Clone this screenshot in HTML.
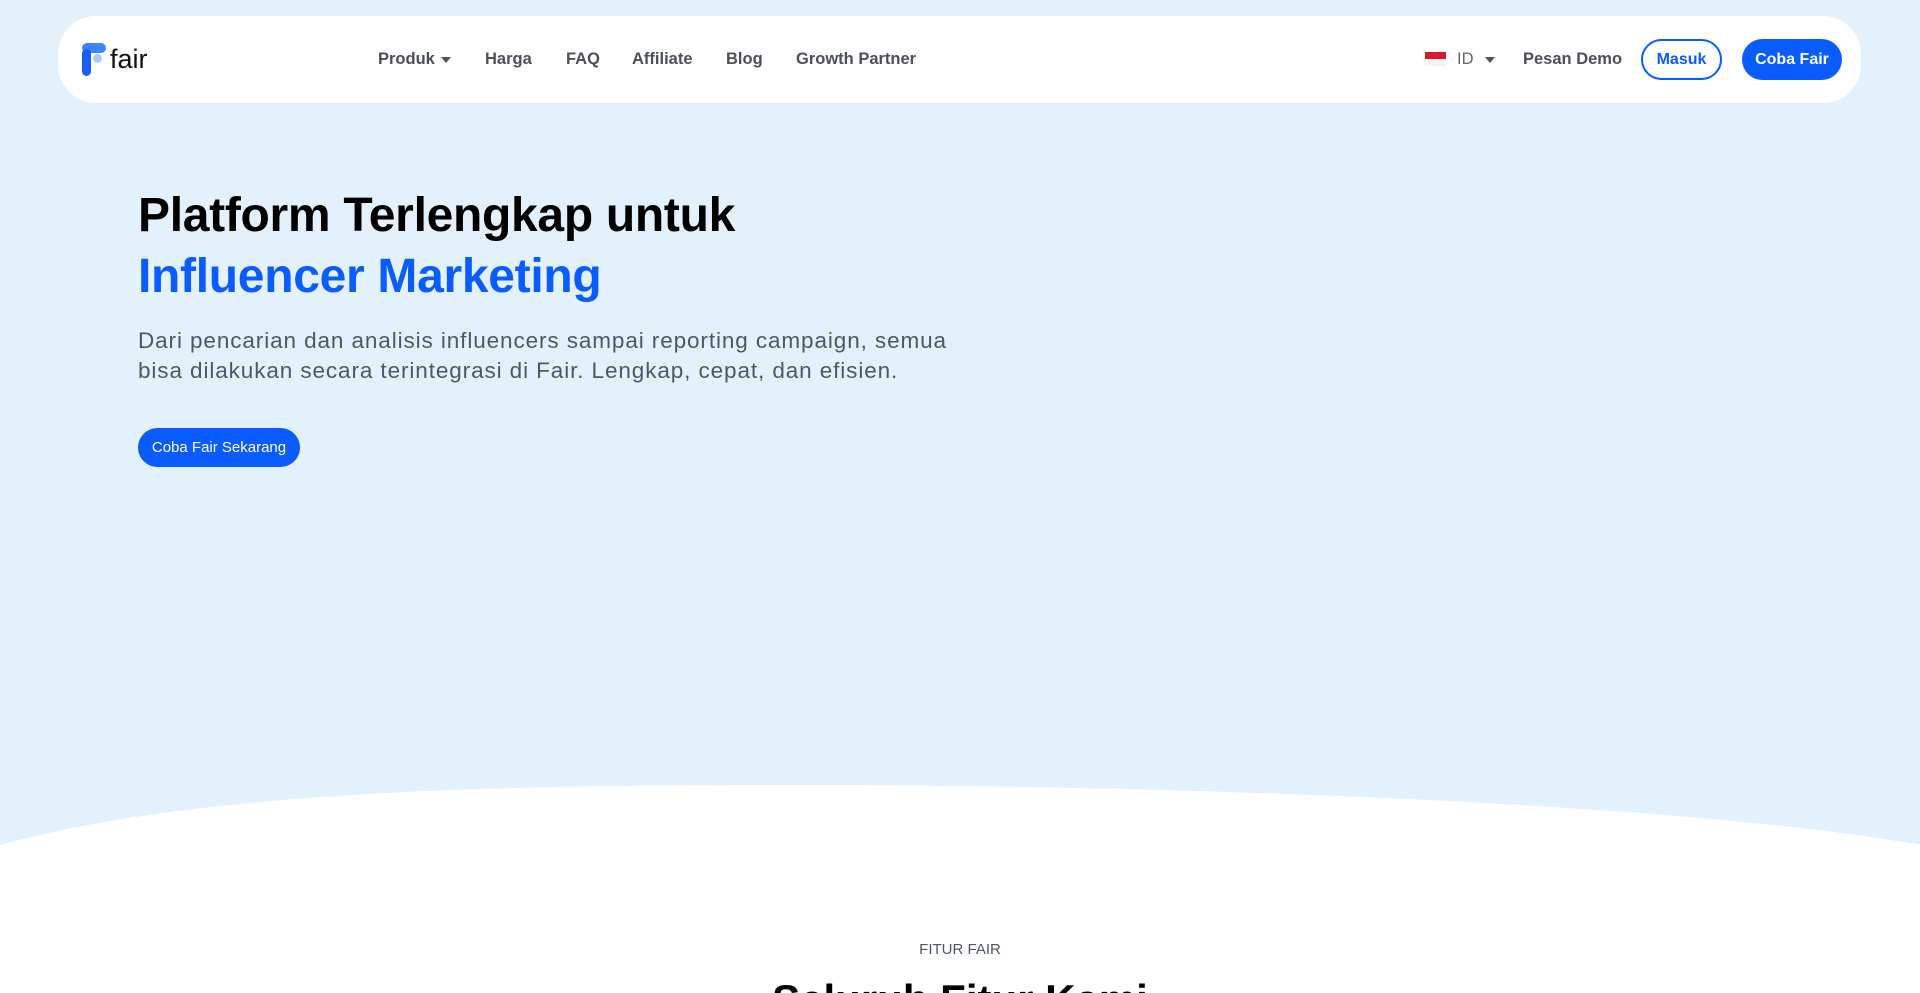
<!DOCTYPE html>
<html><head><meta charset="utf-8"><style>
*{margin:0;padding:0;box-sizing:border-box}
html,body{width:1920px;height:993px;overflow:hidden;background:#e3f1fd;font-family:"Liberation Sans",sans-serif}
#wrap{position:relative;width:1920px;height:993px;overflow:hidden}
.nav{position:absolute;left:58px;top:16px;width:1803px;height:87px;background:#fff;border-radius:38px}
.logo{position:absolute;left:82px;top:43px}
.logotxt{position:absolute;left:110px;top:44px;font-size:27px;color:#111}
.lk{position:absolute;top:50px;font-size:16.5px;color:#4b4f57;font-weight:bold;white-space:nowrap}
.car{display:inline-block;width:0;height:0;border-left:5px solid transparent;border-right:5px solid transparent;border-top:6px solid #555;margin-left:6px;vertical-align:middle}
.btn{position:absolute;border-radius:22px;font-size:16px;font-weight:bold;display:flex;align-items:center;justify-content:center}
h1{position:absolute;left:138px;top:185px;font-size:48px;line-height:61px;color:#000;font-weight:bold;letter-spacing:-0.3px}
h1 span{color:#0a5cff}
p.sub{position:absolute;left:138px;top:326px;width:830px;font-size:22.5px;line-height:30px;color:#4e5865;letter-spacing:0.9px}
</style></head><body><div id="wrap">
<div class="nav"></div>
<svg class="logo" width="24" height="34" viewBox="0 0 24 34"><rect x="0" y="0" width="24" height="10" rx="5" fill="#3b86ff"/><rect x="0" y="6" width="9" height="27" rx="4.5" fill="#1a5cf5"/><circle cx="15.5" cy="15.5" r="4.5" fill="#a9ccff"/></svg>
<div class="logotxt">fair</div>
<div class="lk" style="left:378px">Produk<span class="car"></span></div>
<div class="lk" style="left:485px">Harga</div>
<div class="lk" style="left:566px">FAQ</div>
<div class="lk" style="left:632px">Affiliate</div>
<div class="lk" style="left:726px">Blog</div>
<div class="lk" style="left:796px">Growth Partner</div>
<div style="position:absolute;left:1425px;top:52px;width:21px;height:14px"><div style="height:7px;background:#d9182e"></div><div style="height:7px;background:#f4f4f4"></div></div>
<div class="lk" style="left:1457px;font-weight:normal;color:#666">ID</div>
<div class="car" style="position:absolute;left:1485px;top:57px;margin:0"></div>
<div class="lk" style="left:1523px">Pesan Demo</div>
<div class="btn" style="left:1641px;top:39px;width:81px;height:41px;border:2px solid #0a5cff;color:#0a5cff">Masuk</div>
<div class="btn" style="left:1742px;top:39px;width:100px;height:41px;background:#0a5cff;color:#fff">Coba Fair</div>
<h1>Platform Terlengkap untuk<br><span>Influencer Marketing</span></h1>
<p class="sub">Dari pencarian dan analisis influencers sampai reporting campaign, semua<br>bisa dilakukan secara terintegrasi di Fair. Lengkap, cepat, dan efisien.</p>
<div class="btn" style="left:138px;top:428px;width:162px;height:39px;background:#0a5cff;color:#fff;font-weight:normal;font-size:15px">Coba Fair Sekarang</div>
<svg style="position:absolute;left:0;top:780px" width="1920" height="213" viewBox="0 0 1920 213"><path d="M0 65 C200 10 500 5 800 5 C1200 5 1700 25 1920 65 L1920 213 L0 213 Z" fill="#fff"/></svg>
<div style="position:absolute;left:0;width:1920px;top:941px;text-align:center;font-size:15px;color:#4e5865">FITUR FAIR</div>
<div style="position:absolute;left:0;width:1920px;top:976px;text-align:center;font-size:42px;font-weight:bold;color:#000">Seluruh Fitur Kami</div>
</div></body></html>
